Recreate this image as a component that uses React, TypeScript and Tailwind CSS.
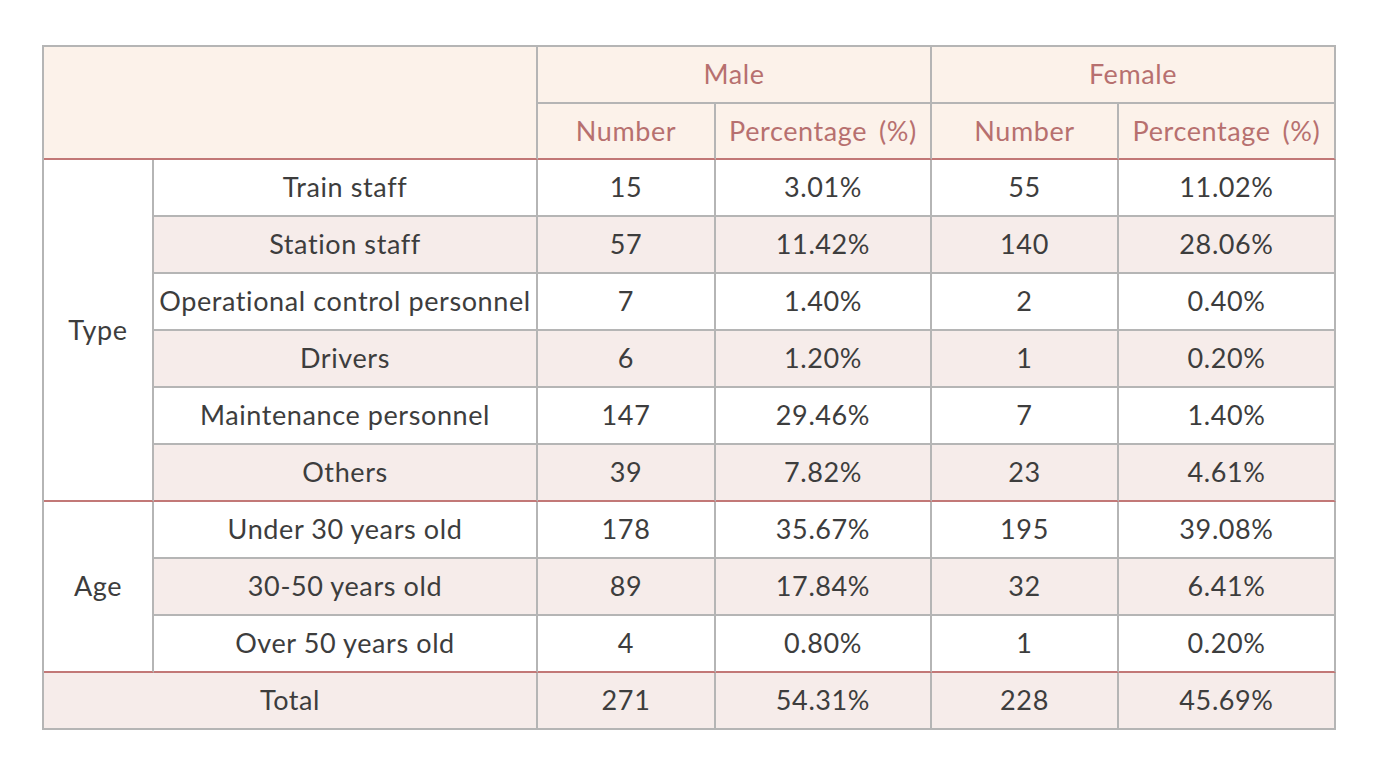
import React from 'react';

const rows = [
  { group: 'Type', label: 'Train staff', m: '15', mp: '3.01%', f: '55', fp: '11.02%' },
  { group: 'Type', label: 'Station staff', m: '57', mp: '11.42%', f: '140', fp: '28.06%' },
  { group: 'Type', label: 'Operational control personnel', m: '7', mp: '1.40%', f: '2', fp: '0.40%' },
  { group: 'Type', label: 'Drivers', m: '6', mp: '1.20%', f: '1', fp: '0.20%' },
  { group: 'Type', label: 'Maintenance personnel', m: '147', mp: '29.46%', f: '7', fp: '1.40%' },
  { group: 'Type', label: 'Others', m: '39', mp: '7.82%', f: '23', fp: '4.61%' },
  { group: 'Age', label: 'Under 30 years old', m: '178', mp: '35.67%', f: '195', fp: '39.08%' },
  { group: 'Age', label: '30-50 years old', m: '89', mp: '17.84%', f: '32', fp: '6.41%' },
  { group: 'Age', label: 'Over 50 years old', m: '4', mp: '0.80%', f: '1', fp: '0.20%' },
];

const Pct = () => (
  <>
    Percentage<span className="ml-[12px]">(%)</span>
  </>
);

const App = () => {
  return (
    <div className="min-h-screen bg-white pt-[45px] pl-[42px] text-[27px] tracking-[0.6px] text-[#3d3d3d]" style={{ fontFamily: 'Lato, "Noto Sans", sans-serif' }}>
      <table className="table-fixed border-separate border-spacing-0 border-l-2 border-t-2 border-[#b5b5b5] w-[1294px] text-center">
        <colgroup>
          <col className="w-[110px]" />
          <col className="w-[384px]" />
          <col className="w-[178px]" />
          <col className="w-[216px]" />
          <col className="w-[187px]" />
          <col />
        </colgroup>
        <thead>
          <tr className="h-[57px] bg-[#fcf2ea] text-[#b7706f]">
            <th colSpan={2} rowSpan={2} className="font-normal border-r-2 border-b-2 border-r-[#b5b5b5] border-b-[#c27877]"></th>
            <th colSpan={2} className="font-normal border-r-2 border-b-2 border-[#b5b5b5]">Male</th>
            <th colSpan={2} className="font-normal border-r-2 border-b-2 border-[#b5b5b5]">Female</th>
          </tr>
          <tr className="h-[56px] bg-[#fcf2ea] text-[#b7706f]">
            <th className="font-normal border-r-2 border-b-2 border-r-[#b5b5b5] border-b-[#c27877]">Number</th>
            <th className="font-normal border-r-2 border-b-2 border-r-[#b5b5b5] border-b-[#c27877]"><Pct /></th>
            <th className="font-normal border-r-2 border-b-2 border-r-[#b5b5b5] border-b-[#c27877]">Number</th>
            <th className="font-normal border-r-2 border-b-2 border-r-[#b5b5b5] border-b-[#c27877]"><Pct /></th>
          </tr>
        </thead>
        <tbody>
          {rows.map((r, i) => {
            const striped = i % 2 === 1;
            const redBottom = i === 5 || i === 8;
            const cell = `border-r-2 border-b-2 border-r-[#b5b5b5] ${redBottom ? 'border-b-[#c27877]' : 'border-b-[#b5b5b5]'}`;
            return (
              <tr key={r.label} className={`h-[57px] ${striped ? 'bg-[#f6ecea]' : 'bg-white'}`}>
                {(i === 0 || i === 6) && (
                  <td rowSpan={i === 0 ? 6 : 3} className="bg-white border-r-2 border-b-2 border-r-[#b5b5b5] border-b-[#c27877]">
                    {r.group}
                  </td>
                )}
                <td className={cell}>{r.label}</td>
                <td className={cell}>{r.m}</td>
                <td className={cell}>{r.mp}</td>
                <td className={cell}>{r.f}</td>
                <td className={cell}>{r.fp}</td>
              </tr>
            );
          })}
          <tr className="h-[57px] bg-[#f6ecea]">
            <td colSpan={2} className="border-r-2 border-b-2 border-[#b5b5b5]">Total</td>
            <td className="border-r-2 border-b-2 border-[#b5b5b5]">271</td>
            <td className="border-r-2 border-b-2 border-[#b5b5b5]">54.31%</td>
            <td className="border-r-2 border-b-2 border-[#b5b5b5]">228</td>
            <td className="border-r-2 border-b-2 border-[#b5b5b5]">45.69%</td>
          </tr>
        </tbody>
      </table>
    </div>
  );
};

export default App;
